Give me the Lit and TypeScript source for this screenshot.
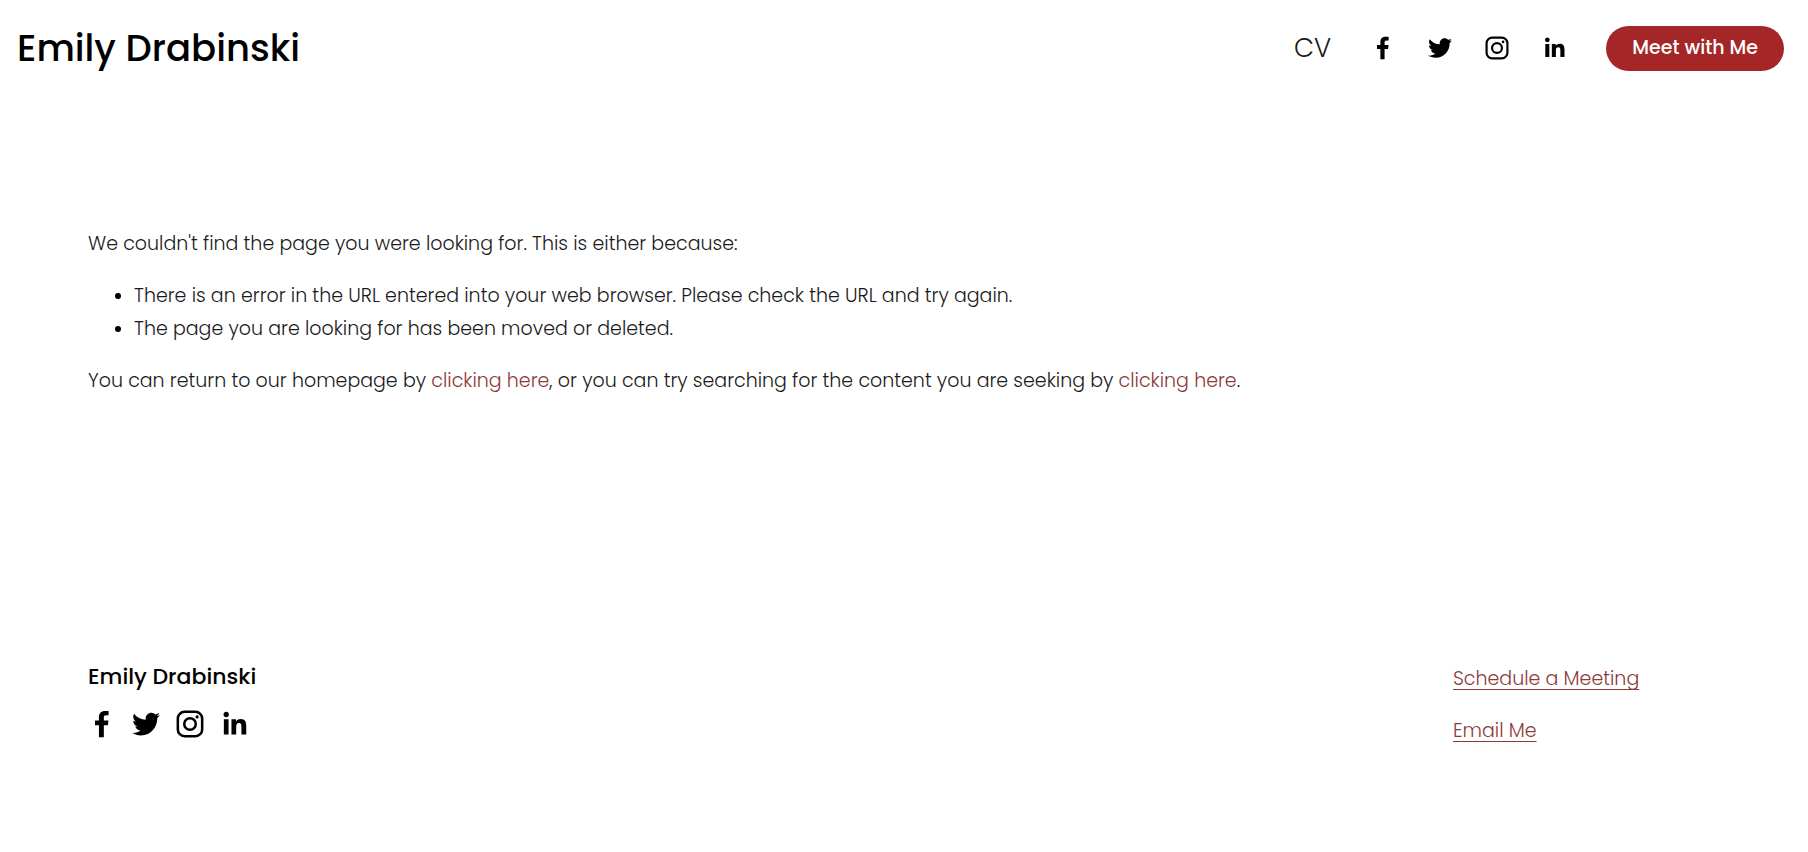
import { LitElement, html, css, svg } from "lit";
import { customElement, property } from "lit/decorators.js";

type Network = "facebook" | "twitter" | "instagram" | "linkedin";

const GLYPHS = {
  facebook: svg`<path d="M34.1,47V33.3h4.6l0.7-5.3h-5.3v-3.4c0-1.5,0.4-2.6,2.6-2.6l2.8,0v-4.8c-0.5-0.1-2.2-0.2-4.1-0.2c-4.1,0-6.9,2.5-6.9,7V28H24v5.3h4.5V47H34.1z"/>`,
  twitter: svg`<path d="M48,22.1c-1.2,0.5-2.4,0.9-3.8,1c1.4-0.8,2.4-2.1,2.9-3.6c-1.3,0.8-2.7,1.3-4.2,1.6C41.7,19.8,40,19,38.2,19c-3.6,0-6.6,2.9-6.6,6.6c0,0.5,0.1,1,0.2,1.5c-5.5-0.3-10.3-2.9-13.5-6.9c-0.6,1-0.9,2.1-0.9,3.3c0,2.3,1.2,4.3,2.9,5.5c-1.1,0-2.1-0.3-3-0.8c0,0,0,0.1,0,0.1c0,3.2,2.3,5.8,5.3,6.4c-0.6,0.1-1.1,0.2-1.7,0.2c-0.4,0-0.8,0-1.2-0.1c0.8,2.6,3.3,4.5,6.1,4.6c-2.2,1.8-5.1,2.8-8.2,2.8c-0.5,0-1.1,0-1.6-0.1c2.9,1.9,6.4,2.9,10.1,2.9c12.1,0,18.7-10,18.7-18.7c0-0.3,0-0.6,0-0.8C46,24.5,47.1,23.4,48,22.1z"/>`,
  instagram: svg`<g fill="none" stroke="currentColor" stroke-width="2.9"><rect x="18.1" y="18.1" width="27.8" height="27.8" rx="7.6"/><circle cx="32" cy="32" r="6.6"/></g><circle cx="40.1" cy="23.9" r="1.8"/>`,
  linkedin: svg`<path d="M20.4,44h5.4V26.6h-5.4V44z M23.1,18c-1.7,0-3.1,1.4-3.1,3.1c0,1.7,1.4,3.1,3.1,3.1c1.7,0,3.1-1.4,3.1-3.1C26.2,19.4,24.8,18,23.1,18z M39.5,26.2c-2.6,0-4.4,1.4-5.1,2.8h-0.1v-2.4h-5.2V44h5.4v-8.6c0-2.3,0.4-4.5,3.2-4.5c2.8,0,2.8,2.6,2.8,4.6V44H46v-9.5C46,29.8,45,26.2,39.5,26.2z"/>`,
};

const NETWORKS: { id: Network; label: string }[] = [
  { id: "facebook", label: "Facebook" },
  { id: "twitter", label: "Twitter" },
  { id: "instagram", label: "Instagram" },
  { id: "linkedin", label: "LinkedIn" },
];

@customElement("social-links")
export class SocialLinks extends LitElement {
  @property({ reflect: true }) size: "small" | "large" = "small";

  static styles = css`
    :host {
      display: flex;
      gap: 33px;
      --icon: 24px;
    }
    :host([size="large"]) {
      gap: 16px;
      --icon: 28px;
    }
    .link {
      display: block;
      color: #000;
    }
    .icon {
      display: block;
      width: var(--icon);
      height: var(--icon);
      fill: currentColor;
    }
  `;

  render() {
    return NETWORKS.map(
      (n) => html`<a class="link" href="#${n.id}" aria-label=${n.label}>
        <svg class="icon" viewBox="16 16 32 32" aria-hidden="true">${GLYPHS[n.id]}</svg>
      </a>`
    );
  }
}

@customElement("app-root")
export class AppRoot extends LitElement {
  static styles = css`
    :host {
      display: flex;
      flex-direction: column;
      min-height: 100vh;
      background: #fff;
      color: #000;
      font-family: Poppins, Inter, "Open Sans", sans-serif;
      font-size: 19px;
      font-weight: 300;
      line-height: 33px;
    }
    .header {
      display: flex;
      align-items: center;
      justify-content: space-between;
      padding: 20px 24px 20px 17px;
    }
    .brand {
      color: inherit;
      text-decoration: none;
      font-size: 37px;
      font-weight: 500;
      line-height: 56px;
    }
    .nav {
      display: flex;
      align-items: center;
      gap: 40px;
    }
    .cv {
      color: #1a1a1a;
      text-decoration: none;
      font-size: 26px;
    }
    .meet {
      height: 45px;
      padding: 0 26px 1px;
      border: 0;
      border-radius: 23px;
      background: #a52626;
      color: #fff;
      font: inherit;
      font-weight: 500;
      cursor: pointer;
    }
    .main {
      padding: 131px 88px 0;
      color: #1a1a1a;
    }
    .text,
    .reasons {
      margin: 0 0 19px;
    }
    .reasons {
      padding-left: 46px;
    }
    .reasons li::marker {
      color: #000;
      font-size: 17px;
    }
    .link {
      color: #8b3a3a;
      text-decoration: none;
    }
    .footer {
      display: grid;
      grid-template-columns: 1fr 267px;
      padding: 246px 88px 96px;
    }
    .name {
      margin: 0 0 18px;
      font-size: 22px;
      font-weight: 500;
      line-height: 30px;
    }
    .contact {
      display: flex;
      flex-direction: column;
      align-items: flex-start;
      gap: 19px;
    }
    .underlined {
      text-decoration: underline;
      text-decoration-thickness: 1px;
      text-underline-offset: 4px;
      text-decoration-skip-ink: none;
    }
  `;

  render() {
    return html`
      <header class="header">
        <a class="brand" href="#home">Emily Drabinski</a>
        <nav class="nav">
          <a class="cv" href="#cv">CV</a>
          <social-links></social-links>
          <button class="meet" type="button">Meet with Me</button>
        </nav>
      </header>
      <main class="main">
        <p class="text">We couldn't find the page you were looking for. This is either because:</p>
        <ul class="reasons">
          <li>There is an error in the URL entered into your web browser. Please check the URL and try again.</li>
          <li>The page you are looking for has been moved or deleted.</li>
        </ul>
        <p class="text">
          You can return to our homepage by <a class="link" href="#home">clicking here</a>, or you can try searching
          for the content you are seeking by <a class="link" href="#search">clicking here</a>.
        </p>
      </main>
      <footer class="footer">
        <div>
          <h2 class="name">Emily Drabinski</h2>
          <social-links size="large"></social-links>
        </div>
        <div class="contact">
          <a class="link underlined" href="#schedule">Schedule a Meeting</a>
          <a class="link underlined" href="#email">Email Me</a>
        </div>
      </footer>
    `;
  }
}
